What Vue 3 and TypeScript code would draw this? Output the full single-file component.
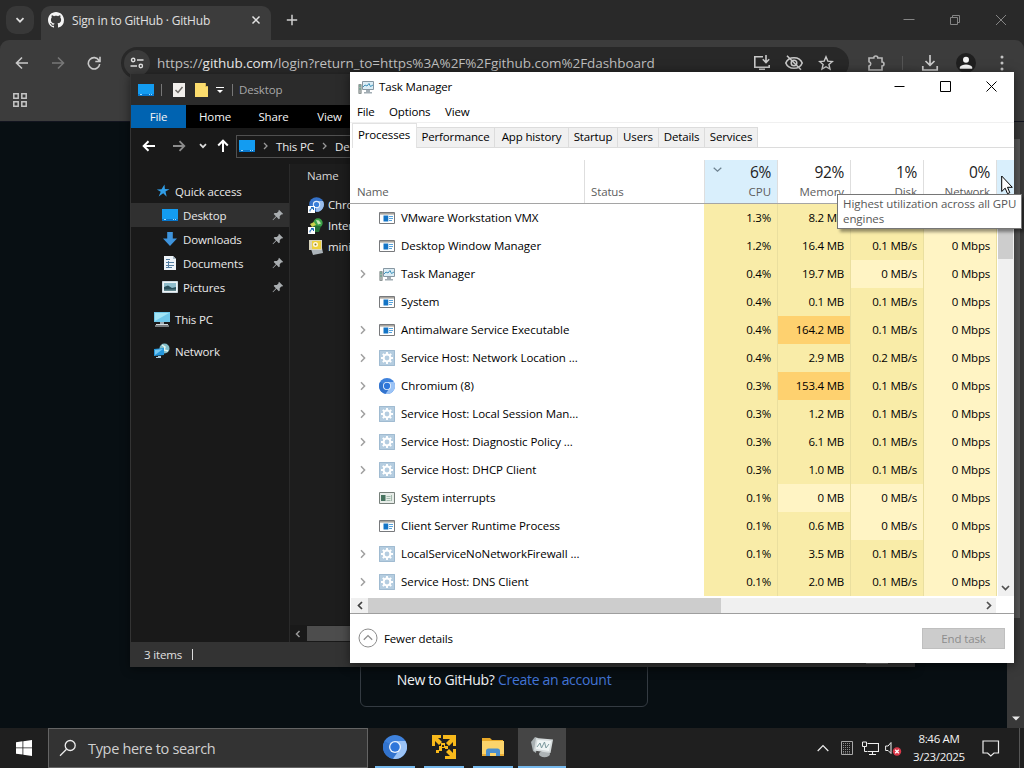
<script setup lang="ts">
interface Proc {
  name: string
  icon: string
  expand: boolean
  cpu: string
  mem: string
  disk: string
}

const processes: Proc[] = [
  { name: 'VMware Workstation VMX', icon: 'app', expand: false, cpu: '1.3%', mem: '8.2 MB', disk: '' },
  { name: 'Desktop Window Manager', icon: 'app', expand: false, cpu: '1.2%', mem: '16.4 MB', disk: '0.1 MB/s' },
  { name: 'Task Manager', icon: 'taskmgr', expand: true, cpu: '0.4%', mem: '19.7 MB', disk: '0 MB/s' },
  { name: 'System', icon: 'app', expand: false, cpu: '0.4%', mem: '0.1 MB', disk: '0.1 MB/s' },
  { name: 'Antimalware Service Executable', icon: 'app', expand: true, cpu: '0.4%', mem: '164.2 MB', disk: '0.1 MB/s' },
  { name: 'Service Host: Network Location ...', icon: 'gear', expand: true, cpu: '0.4%', mem: '2.9 MB', disk: '0.2 MB/s' },
  { name: 'Chromium (8)', icon: 'chromium', expand: true, cpu: '0.3%', mem: '153.4 MB', disk: '0.1 MB/s' },
  { name: 'Service Host: Local Session Man...', icon: 'gear', expand: true, cpu: '0.3%', mem: '1.2 MB', disk: '0.1 MB/s' },
  { name: 'Service Host: Diagnostic Policy ...', icon: 'gear', expand: true, cpu: '0.3%', mem: '6.1 MB', disk: '0.1 MB/s' },
  { name: 'Service Host: DHCP Client', icon: 'gear', expand: true, cpu: '0.3%', mem: '1.0 MB', disk: '0.1 MB/s' },
  { name: 'System interrupts', icon: 'sysint', expand: false, cpu: '0.1%', mem: '0 MB', disk: '0 MB/s' },
  { name: 'Client Server Runtime Process', icon: 'app', expand: false, cpu: '0.1%', mem: '0.6 MB', disk: '0 MB/s' },
  { name: 'LocalServiceNoNetworkFirewall ...', icon: 'gear', expand: true, cpu: '0.1%', mem: '3.5 MB', disk: '0.1 MB/s' },
  { name: 'Service Host: DNS Client', icon: 'gear', expand: true, cpu: '0.1%', mem: '2.0 MB', disk: '0.1 MB/s' },
]

const heat = (value: string): string => {
  const n = parseFloat(value)
  if (n === 0) return 'cool'
  return n > 100 ? 'hot' : 'warm'
}

const quickAccess = [
  { name: 'Desktop', icon: 'desktop', active: true },
  { name: 'Downloads', icon: 'downloads', active: false },
  { name: 'Documents', icon: 'documents', active: false },
  { name: 'Pictures', icon: 'pictures', active: false },
]

const files = [
  { name: 'Chromium', icon: 'chromelink' },
  { name: 'Internet', icon: 'netlink' },
  { name: 'mini', icon: 'installer' },
]

const tabs = ['Performance', 'App history', 'Startup', 'Users', 'Details', 'Services']
</script>

<template>
  <div class="screen">
    <svg class="defs" aria-hidden="true">
      <symbol id="i-app" viewBox="0 0 16 16">
        <path d="M.5 2.5h15v11H.5z" fill="#fff" stroke="#77797c" />
        <path d="M1 3h14v1.600H1z" fill="#a9a59e" />
        <path d="M4.500 5.500h4.800v6H4.500z" fill="#1374c6" />
        <path d="M10 6.500h4M10 8.500h4M10 10.500h3" stroke="#58a4dd" />
      </symbol>
      <symbol id="i-sysint" viewBox="0 0 16 16">
        <path d="M.5 2.500h15v11H.5z" fill="#e7ece8" stroke="#77807b" />
        <path d="M2 5h4.500v6H2z" fill="#47735f" />
        <path d="M7.500 6.500h4M7.500 8.500h4M7.500 10.500h4M12.500 5v6" stroke="#a4bcae" />
      </symbol>
      <symbol id="i-taskmgr" viewBox="0 0 16 16">
        <path d="M.8 5.500h2.400v9H.8z" fill="#b5b9b8" stroke="#7f8988" stroke-width=".8" />
        <path d="M1 7h2M1 10h2" stroke="#54a083" />
        <path d="M4.500 2.500h11v8h-11z" fill="#dcedf5" stroke="#8797a2" />
        <path d="M5 8l2-2 2 1 2-2.500 1.500 3L15 6" fill="none" stroke="#3e92bb" />
        <path d="M8 11h4v2H8zM6 13h8v1.500H6z" fill="#a2adb4" />
      </symbol>
      <symbol id="i-gear" viewBox="0 0 16 16">
        <path d="M0 0h16v16H0z" fill="#b5cde0" />
        <path d="M.5.5h15v15H.5z" fill="none" stroke="#a0bbd1" />
        <circle cx="8" cy="8" r="3.400" fill="none" stroke="#fff" stroke-width="2" />
        <path d="M8 2v2.500M8 11.500V14M2 8h2.500M11.500 8H14M3.800 3.800l1.700 1.700M10.500 10.500l1.700 1.700M12.200 3.800l-1.700 1.700M5.500 10.500l-1.700 1.700" stroke="#fff" stroke-width="1.900" />
      </symbol>
      <symbol id="i-chromium" viewBox="0 0 24 24">
        <circle cx="12" cy="12" r="12" fill="#3f82dc" />
        <path d="M12 12L1.600 6A12 12 0 0 0 10 23.800L16 14z" fill="#3273cd" />
        <path d="M12 6h10.400A12 12 0 0 1 10 23.800L17 14z" fill="#9bc3f6" />
        <circle cx="12" cy="12" r="6" fill="#e9f2fd" />
        <circle cx="12" cy="12" r="4.700" fill="#2f76da" />
      </symbol>
      <symbol id="i-desktop" viewBox="0 0 16 16">
        <path d="M0 2h16v10H0z" fill="#139cf1" />
        <path d="M0 12h16v2H0z" fill="#0877cc" />
        <path d="M2 12.500h2M11 12.500h1M13 12.500h1" stroke="#9ddafd" />
      </symbol>
      <symbol id="i-downloads" viewBox="0 0 16 16">
        <path d="M5.200 1h5.600v6.500H15L8 15 1 7.500h4.200z" fill="#3e94dd" />
      </symbol>
      <symbol id="i-documents" viewBox="0 0 16 16">
        <path d="M2 1h9l3 3v11H2z" fill="#edf3f8" />
        <path d="M11 1v3h3z" fill="#aabac7" />
        <path d="M4 4.500h4M4 7.500h8M4 10.500h8M4 12.500h6M6.500 6v7" stroke="#537da1" />
      </symbol>
      <symbol id="i-pictures" viewBox="0 0 16 16">
        <path d="M.5 2.500h15v11H.5z" fill="#eef4f7" stroke="#ccd8df" />
        <path d="M2 4h12v8H2z" fill="#8ebccb" />
        <path d="M2 8l4-1.500L10 9l4-1v4H2z" fill="#294f5b" />
        <path d="M2 10.500h12V12H2z" fill="#648990" />
      </symbol>
      <symbol id="i-pc" viewBox="0 0 16 16">
        <path d="M0 1h16v10H0z" fill="#6fc7e9" />
        <path d="M1 2h14L1 10z" fill="#a1e4f5" />
        <path d="M6 11h4v2H6z" fill="#9cabb3" />
        <path d="M2 13.500h12M1 15h14" stroke="#d4dce1" />
      </symbol>
      <symbol id="i-network" viewBox="0 0 16 16">
        <circle cx="10.500" cy="5.500" r="5" fill="#83bec9" />
        <path d="M8 2l3 2-1 3 4 1" fill="none" stroke="#e6f5ec" stroke-width="1.500" />
        <path d="M0 6l10-1v7L0 13z" fill="#2597dc" />
        <path d="M1 7l8-1L1 12z" fill="#76c8f2" />
        <path d="M4 13h3v2H2v-1h2z" fill="#acc8d9" />
      </symbol>
      <symbol id="i-chromelink" viewBox="0 0 16 16">
        <circle cx="8.500" cy="7.500" r="7.300" fill="#3572c9" />
        <path d="M8.500 4h6.500A7.300 7.300 0 0 1 8 14.800z" fill="#99bdec" />
        <circle cx="8.500" cy="7.500" r="3.700" fill="#e4effb" />
        <circle cx="8.500" cy="7.500" r="2.600" fill="#397fda" />
        <path d="M0 9h7v7H0z" fill="#fff" />
        <path d="M2 14.500v-2l3-1.500M3 10.500h2.500V13" stroke="#1768bb" fill="none" />
      </symbol>
      <symbol id="i-netlink" viewBox="0 0 16 16">
        <circle cx="10" cy="5" r="4.700" fill="#3da249" />
        <path d="M8 2l3 .5 2 3-3 1z" fill="#c6e6b3" />
        <path d="M4 7l9 1-2 6H6z" fill="#226f36" />
        <path d="M2 6l4-2 2 3-4 2z" fill="#cbd24d" />
        <path d="M0 9h7v7H0z" fill="#fff" />
        <path d="M2 14.500v-2l3-1.500M3 10.500h2.500V13" stroke="#1768bb" fill="none" />
      </symbol>
      <symbol id="i-installer" viewBox="0 0 16 16">
        <path d="M3 10l11-1 1 5-10 2z" fill="#acb4ba" />
        <path d="M1 1h13v10H1z" fill="#d8d3bb" />
        <path d="M4 2h9v8H4z" fill="#eed13e" />
        <circle cx="7.500" cy="5.500" r="2.500" fill="#fff9df" />
        <circle cx="7.500" cy="5.500" r="1" fill="#8b7930" />
      </symbol>
      <symbol id="i-pin" viewBox="0 0 12 12">
        <path d="M7 .8l4.200 4.200-1.300.6-.6-.1-1.600 1.700.1 2.200-1 .8-2.300-2.400L1 11.200l-.4-.4L3.900 7.300 1.700 5l.8-1 2.300.1 1.700-1.600-.1-.6z" fill="#a9adb0" />
      </symbol>
    </svg>

    <!-- Browser -->
    <section class="browser">
      <div class="tabstrip">
        <div class="tabsearch">
          <svg width="12" height="12" viewBox="0 0 12 12"><path d="M2.500 4.200L6 7.700l3.500-3.500" fill="none" stroke="#dedede" stroke-width="1.700" /></svg>
        </div>
        <div class="btab">
          <svg width="16" height="16" viewBox="0 0 16 16"><path fill="#f5f5f5" d="M8 0C3.580 0 0 3.580 0 8c0 3.540 2.290 6.530 5.470 7.590.4.070.55-.17.55-.38 0-.19-.01-.82-.01-1.490-2.010.37-2.530-.49-2.690-.94-.09-.23-.48-.94-.82-1.130-.28-.15-.68-.52-.01-.53.630-.01 1.080.58 1.230.82.720 1.210 1.870.87 2.330.66.070-.52.280-.87.510-1.070-1.780-.2-3.640-.89-3.640-3.950 0-.87.310-1.590.82-2.150-.08-.2-.36-1.020.08-2.120 0 0 .67-.21 2.200.82.640-.18 1.320-.27 2-.27s1.360.09 2 .27c1.530-1.040 2.200-.82 2.200-.82.440 1.100.16 1.920.08 2.120.51.56.82 1.270.82 2.150 0 3.070-1.870 3.750-3.650 3.950.29.25.54.73.54 1.480 0 1.070-.01 1.930-.01 2.200 0 .21.15.46.55.38A8.010 8.010 0 0 0 16 8c0-4.420-3.580-8-8-8z" /></svg>
          <span class="btitle">Sign in to GitHub · GitHub</span>
          <svg class="bclose" width="10" height="10" viewBox="0 0 10 10"><path d="M1.500 1.500l7 7M8.500 1.500l-7 7" stroke="#e3e3e3" stroke-width="1.500" /></svg>
        </div>
        <svg class="plus" width="12" height="12" viewBox="0 0 12 12"><path d="M6 .8v10.400M.8 6h10.400" stroke="#cfcfcf" stroke-width="1.500" /></svg>
        <div class="bcontrols">
          <svg width="12" height="12" viewBox="0 0 12 12"><path d="M.5 5.500h11" stroke="#858585" /></svg>
          <svg width="12" height="12" viewBox="0 0 12 12"><path d="M1.500 3.500h7v7h-7zM3.500 3.500v-2h7v7h-2" fill="none" stroke="#858585" /></svg>
          <svg width="12" height="12" viewBox="0 0 12 12"><path d="M1 1l10 10M11 1L1 11" stroke="#858585" /></svg>
        </div>
      </div>
      <div class="toolbar">
        <svg class="nav" width="14" height="14" viewBox="0 0 14 14"><path d="M13 7H2M7 1.500L1.500 7 7 12.500" fill="none" stroke="#c9c9c9" stroke-width="1.600" /></svg>
        <svg class="nav fwd" width="14" height="14" viewBox="0 0 14 14"><path d="M1 7h11M7 1.500L12.500 7 7 12.500" fill="none" stroke="#777" stroke-width="1.600" /></svg>
        <svg class="nav rel" width="14" height="14" viewBox="0 0 14 14"><path d="M12 4.500A5.700 5.700 0 1 0 12.700 8M13 .8v4.700H8.300" fill="none" stroke="#c9c9c9" stroke-width="1.600" /></svg>
        <div class="address">
          <div class="site">
            <svg width="14" height="12" viewBox="0 0 14 12"><g fill="none" stroke="#dedede" stroke-width="1.400"><circle cx="3.200" cy="3" r="1.700" /><circle cx="10.800" cy="9" r="1.700" /><path d="M7 3h6.500M.5 9H7" /></g></svg>
          </div>
          <span class="url">https://<b>github.com</b>/login?return_to=https%3A%2F%2Fgithub.com%2Fdashboard</span>
          <svg class="install" width="18" height="16" viewBox="0 0 18 16"><path d="M10 1.800H1.800v10.400h14.400V10M6 14.200h6M13 0v7M9.800 4.300L13 7.500l3.200-3.200" fill="none" stroke="#c9c9c9" stroke-width="1.600" /></svg>
          <svg width="20" height="16" viewBox="0 0 20 16"><path d="M1.800 8C4.500 1 15.500 1 18.200 8 15.500 15 4.500 15 1.800 8zM3 .8l14 14" fill="none" stroke="#c9c9c9" stroke-width="1.600" /><circle cx="10" cy="8" r="2.800" fill="none" stroke="#c9c9c9" stroke-width="1.500" /></svg>
          <svg width="16" height="16" viewBox="0 0 16 16"><path d="M8 1.800l1.800 4.300 4.600.4-3.500 3 1.100 4.600L8 11.700l-4 2.400 1.100-4.600-3.500-3 4.600-.4z" fill="none" stroke="#c9c9c9" stroke-width="1.400" /></svg>
        </div>
        <div class="actions">
          <svg width="18" height="18" viewBox="0 0 18 18"><path d="M2 4h4.800a2 2 0 0 1 4 0H15v4a2 2 0 0 1 0 4v4H2v-4a2.200 2.200 0 0 0 0-4.300z" fill="none" stroke="#b9b9b9" stroke-width="1.600" /></svg>
          <i class="divider"></i>
          <svg width="18" height="18" viewBox="0 0 18 18"><path d="M9 1v10M4.500 7L9 11.300 13.500 7M1.800 12v4h14.400v-4" fill="none" stroke="#c9c9c9" stroke-width="1.700" /></svg>
          <div class="avatar"><svg width="14" height="14" viewBox="0 0 14 14"><circle cx="7" cy="3.700" r="3" fill="#f3f3f3" /><path d="M.8 12.800V11C2.500 7.500 11.500 7.500 13.200 11v1.800z" fill="#f3f3f3" /></svg></div>
          <svg width="4" height="16" viewBox="0 0 4 16"><g fill="#c4c4c4"><circle cx="2" cy="2" r="1.500" /><circle cx="2" cy="8" r="1.500" /><circle cx="2" cy="14" r="1.500" /></g></svg>
        </div>
      </div>
      <div class="bookmarks">
        <svg width="16" height="16" viewBox="0 0 16 16"><path d="M1.800 1.800h4.400v4.400H1.800zM9.800 1.800h4.400v4.400H9.800zM1.800 9.800h4.400v4.400H1.800zM9.800 9.800h4.400v4.400H9.800z" fill="none" stroke="#c4c4c4" stroke-width="1.500" /></svg>
      </div>
      <div class="page">
        <div class="signup"><span class="q">New to GitHub?</span> <a>Create an account</a></div>
        <div class="pagebar">
          <div class="pagethumb"></div>
          <svg width="8" height="5" viewBox="0 0 8 5"><path d="M0 .5h8L4 4.500z" fill="#e8e8e8" /></svg>
        </div>
      </div>
    </section>

    <!-- File explorer -->
    <section class="explorer">
      <header class="extitle">
        <svg width="16" height="16"><use href="#i-desktop" /></svg>
        <i class="bar"></i>
        <svg class="doc" width="12" height="16" viewBox="0 0 12 16"><path d="M0 1h12v14H0z" fill="#f1efec" /><path d="M2.500 8l2.500 2.500L9.500 5" fill="none" stroke="#6d6a67" stroke-width="1.500" /></svg>
        <svg class="fold" width="13" height="16" viewBox="0 0 13 16"><path d="M0 1h10v3h3v11H0z" fill="#fbdc6d" /><path d="M10.500 1v3.500H13" fill="none" stroke="#d9b955" /></svg>
        <svg class="drop" width="8" height="8" viewBox="0 0 8 8"><path d="M0 1.500h8" stroke="#fff" /><path d="M1 4h6L4 7z" fill="#fff" /></svg>
        <i class="bar"></i>
        <span class="exname">Desktop</span>
      </header>
      <nav class="ribbon"><span class="file">File</span><span class="r1">Home</span><span class="r2">Share</span><span class="r3">View</span></nav>
      <div class="exnav">
        <svg width="14" height="12" viewBox="0 0 14 12"><path d="M13 6H2M6.500 1.200L1.700 6l4.800 4.800" fill="none" stroke="#fff" stroke-width="2" /></svg>
        <svg class="ef" width="14" height="12" viewBox="0 0 14 12"><path d="M1 6h11M7.500 1.200L12.300 6l-4.800 4.800" fill="none" stroke="#8c8c8c" stroke-width="1.800" /></svg>
        <svg class="ec" width="8" height="6" viewBox="0 0 8 6"><path d="M1 1.200l3 3 3-3" fill="none" stroke="#ddd" stroke-width="1.700" /></svg>
        <svg class="eu" width="12" height="14" viewBox="0 0 12 14"><path d="M6 13V2M1.200 6.500L6 1.700l4.800 4.800" fill="none" stroke="#fff" stroke-width="2" /></svg>
        <div class="crumbs">
          <svg width="16" height="16"><use href="#i-desktop" /></svg>
          <svg class="cv" width="5" height="8" viewBox="0 0 5 8"><path d="M1 1l3 3-3 3" fill="none" stroke="#999" stroke-width="1.300" /></svg>
          <span>This PC</span>
          <svg class="cv" width="5" height="8" viewBox="0 0 5 8"><path d="M1 1l3 3-3 3" fill="none" stroke="#999" stroke-width="1.300" /></svg>
          <span>De</span>
        </div>
      </div>
      <div class="exbody">
        <aside>
          <div class="item root"><svg width="14" height="14" viewBox="0 0 14 14"><path d="M8.500.5l.4 4.500 4.600.3-4 2.200 1.200 5.200-3.500-3.500-4.500 3.300 2-4.700L.8 5.500l4.700-.2z" fill="#319ee7" /></svg><span>Quick access</span></div>
          <div v-for="q in quickAccess" :key="q.name" class="item sub" :class="{ on: q.active }">
            <svg width="16" height="16"><use :href="'#i-' + q.icon" /></svg><span>{{ q.name }}</span>
            <svg class="pin" width="12" height="12"><use href="#i-pin" /></svg>
          </div>
          <div class="item top"><svg width="16" height="16"><use href="#i-pc" /></svg><span>This PC</span></div>
          <div class="item top"><svg width="16" height="16"><use href="#i-network" /></svg><span>Network</span></div>
        </aside>
        <div class="files">
          <div class="fhead">Name</div>
          <div v-for="f in files" :key="f.name" class="frow"><svg width="16" height="16"><use :href="'#i-' + f.icon" /></svg><span>{{ f.name }}</span></div>
          <div class="fscroll">
            <svg width="6" height="8" viewBox="0 0 6 8"><path d="M4.500 1l-3 3 3 3" fill="none" stroke="#999" stroke-width="1.500" /></svg>
            <div class="fthumb"></div>
          </div>
        </div>
      </div>
      <footer class="exstatus"><span>3 items</span><i></i><div class="viewmode"></div></footer>
    </section>

    <!-- Task Manager -->
    <section class="tm">
      <header class="tmtitle">
        <svg width="16" height="16"><use href="#i-taskmgr" /></svg>
        <span>Task Manager</span>
        <div class="wc">
          <svg width="11" height="11" viewBox="0 0 11 11"><path d="M.5 5.500h10" stroke="#000" /></svg>
          <svg width="11" height="11" viewBox="0 0 11 11"><path d="M.5.5h10v10H.5z" fill="none" stroke="#000" /></svg>
          <svg width="11" height="11" viewBox="0 0 11 11"><path d="M.5.5l10 10M10.500.5l-10 10" stroke="#000" /></svg>
        </div>
      </header>
      <nav class="menu"><span class="m1">File</span><span class="m2">Options</span><span>View</span></nav>
      <nav class="tabs">
        <span class="sel">Processes</span>
        <span v-for="(t, i) in tabs" :key="t" class="tab" :class="'t' + i">{{ t }}</span>
        <div class="rest"></div>
      </nav>
      <div class="thead">
        <div class="h hn">Name</div>
        <div class="h hs">Status</div>
        <div class="h num sorted">
          <svg class="sort" width="9" height="6" viewBox="0 0 9 6"><path d="M.7.8l3.800 3.500L8.300.8" fill="none" stroke="#6d8290" stroke-width="1.200" /></svg>
          <b>6%</b><span>CPU</span>
        </div>
        <div class="h num"><b>92%</b><span>Memory</span></div>
        <div class="h num"><b>1%</b><span>Disk</span></div>
        <div class="h num"><b>0%</b><span>Network</span></div>
        <div class="h hover"></div>
      </div>
      <div class="tbody">
        <div class="rows">
          <div v-for="(p, i) in processes" :key="p.name" class="row">
            <div class="cell name">
              <svg class="exp" width="6" height="10" viewBox="0 0 6 10"><path v-if="p.expand" d="M1 1.200L4.600 5 1 8.800" fill="none" stroke="#a0a0a0" stroke-width="1.500" /></svg>
              <svg width="16" height="16"><use :href="'#i-' + p.icon" /></svg>
              <span>{{ p.name }}</span>
            </div>
            <div class="cell warm">{{ p.cpu }}</div>
            <div class="cell" :class="heat(p.mem)">{{ p.mem }}</div>
            <div class="cell" :class="heat(p.disk)">{{ p.disk }}</div>
            <div class="cell cool">{{ i > 0 ? '0 Mbps' : '' }}</div>
          </div>
        </div>
        <div class="vbar">
          <div class="vthumb"></div>
          <svg width="9" height="6" viewBox="0 0 9 6"><path d="M1 1l3.500 3.500L8 1" fill="none" stroke="#505050" stroke-width="1.700" /></svg>
        </div>
      </div>
      <div class="hbar">
        <div class="hb"><svg width="6" height="9" viewBox="0 0 6 9"><path d="M5 1L1.500 4.500 5 8" fill="none" stroke="#404040" stroke-width="1.700" /></svg></div>
        <div class="hthumb"></div>
        <div class="hb last"><svg width="6" height="9" viewBox="0 0 6 9"><path d="M1 1l3.500 3.500L1 8" fill="none" stroke="#505050" stroke-width="1.700" /></svg></div>
      </div>
      <footer class="tmfoot">
        <svg width="20" height="20" viewBox="0 0 20 20"><circle cx="10" cy="10" r="9" fill="#fff" stroke="#8d8d8d" /><path d="M5.800 11.800L10 7.600l4.200 4.200" fill="none" stroke="#8d8d8d" stroke-width="1.300" /></svg>
        <span>Fewer details</span>
        <div class="end">End task</div>
      </footer>
    </section>

    <div class="tooltip">Highest utilization across all GPU<br />engines</div>
    <svg class="cursor" width="12" height="20" viewBox="0 0 12 20"><path d="M.7 1v15.500l3.500-3.300 2.300 5.500 2.300-1L6.500 12.300h4.800z" fill="#fff" stroke="#000" /></svg>

    <!-- Taskbar -->
    <footer class="taskbar">
      <div class="start"><svg width="16" height="16" viewBox="0 0 16 16"><path d="M0 2.200L6.500 1.300v6.200H0zM7.300 1.200L16 0v7.500H7.300zM0 8.300h6.500v6.300L0 13.700zM7.300 8.300H16V16l-8.700-1.300z" fill="#fff" /></svg></div>
      <div class="search">
        <svg width="18" height="18" viewBox="0 0 18 18"><circle cx="11.200" cy="6.500" r="5" fill="none" stroke="#ededed" stroke-width="1.300" /><path d="M7.500 10.200L1 16.700" stroke="#ededed" stroke-width="1.300" /></svg>
        <span>Type here to search</span>
      </div>
      <div class="app"><svg width="24" height="24"><use href="#i-chromium" /></svg></div>
      <div class="app"><svg width="24" height="24" viewBox="0 0 24 24">
        <path d="M0 0h9v3H6l4 4-3 3-4-4v5H0zM11 0h13v11h-3V7l-4 4-3-3 4-4h-7zM24 14v10H13v-3h5l-4-4 3-3 4 4v-4z" fill="#f8b91b" />
        <path d="M9 8h4v3h3v3h-3v-1h-3v3H7v2H4v-3h3v-4h2z" fill="#f8b91b" /><path d="M10 10h2v2h-2z" fill="#302513" />
      </svg></div>
      <div class="app"><svg width="24" height="24" viewBox="0 0 24 24">
        <path d="M1 3h8l2 2h11v16H1z" fill="#e9a928" /><path d="M1 6h22v15H1z" fill="#fcd46b" /><path d="M5 21v-5q0-2.500 2.500-2.500h9q2.500 0 2.500 2.500v5h-4v-3H9v3z" fill="#4b8fce" /><path d="M1 19h4v2H1zM19 19h4v2h-4z" fill="#e9ad35" />
      </svg></div>
      <div class="app active"><svg width="24" height="24" viewBox="0 0 24 24">
        <ellipse cx="14.500" cy="19" rx="5.500" ry="3.200" fill="#aeb4b6" />
        <path d="M1 7l4-5 3 1-2 15-3-2z" fill="#a9b0b2" />
        <path d="M6 3l17 1.500L20.500 18 4 15.500z" fill="#d6dcdd" />
        <path d="M7.500 5l13.500 1-2 10L6 14z" fill="#f0f5f5" />
        <path d="M7 12l3-4 1.500 5 3-6 1.500 6 3-4" fill="none" stroke="#7b999d" />
      </svg></div>
      <div class="tray">
        <svg class="up" width="12" height="8" viewBox="0 0 12 8"><path d="M.7 7L6 1.500 11.300 7" fill="none" stroke="#eee" stroke-width="1.200" /></svg>
        <svg class="chip" width="12" height="14" viewBox="0 0 12 14"><path d="M.5.5h11v13H.5z" fill="none" stroke="#a8a8a8" /><path d="M2 2.500h8M2 4.500h8M2 6.500h8M2 8.500h8M2 10.500h8M2 12h8" stroke="#8b8b8b" stroke-dasharray="1 1" /></svg>
        <svg class="net" width="17" height="15" viewBox="0 0 17 15"><path d="M5.500 2.500h11v8h-11M10.500 10.500v3M7 13.500h7" fill="none" stroke="#eee" stroke-width="1.100" /><path d="M.5 1h4v4.500h-4zM2.500 5.500v5H5" fill="none" stroke="#eee" /></svg>
        <svg class="snd" width="17" height="15" viewBox="0 0 17 15"><path d="M.6 5h2.500L6 1.500v11L3.100 9.500H.6z" fill="none" stroke="#eee" /><circle cx="12" cy="10.500" r="4.200" fill="#d93849" /><path d="M10.200 8.700l3.600 3.600M13.800 8.700l-3.600 3.600" stroke="#fff" stroke-width="1.300" /></svg>
        <div class="clock"><span>8:46 AM</span><span class="date">3/23/2025</span></div>
        <svg class="note" width="18" height="17" viewBox="0 0 18 17"><path d="M1 1h15.500v12H12l-3.200 3-3.200-3H1z" fill="none" stroke="#eee" stroke-width="1.200" /></svg>
        <i class="peek"></i>
      </div>
    </footer>
  </div>
</template>

<style>
html, body { margin: 0; overflow: hidden; background: #080f13; }
</style>

<style scoped>
* { box-sizing: border-box; }
.screen { position: relative; width: 1024px; height: 768px; overflow: hidden; background: #080f13; font-family: "Open Sans", "Noto Sans", sans-serif; font-size: 11.5px; letter-spacing: -0.14px; color: #000; white-space: nowrap; }
svg { flex: none; display: block; }
.defs { position: absolute; width: 0; height: 0; }

.browser { display: flex; flex-direction: column; height: 728px; background: #292929; }
.tabstrip { height: 40px; background: #292929; display: flex; align-items: center; flex: none; }
.tabsearch { width: 28px; height: 28px; margin-left: 6px; border-radius: 10px; background: #383838; display: grid; place-items: center; }
.btab { align-self: flex-end; margin-left: 7px; width: 230px; height: 34px; border-radius: 9px 9px 0 0; background: #3c3c3c; display: flex; align-items: center; padding: 0 10px 6px 7px; color: #e0e0e0; font-size: 12px; letter-spacing: -0.2px; }
.btitle { margin-left: 8px; flex: 1; }
.plus { margin-left: 15px; }
.bcontrols { margin-left: auto; margin-right: 17px; display: flex; gap: 34px; }
.toolbar { height: 46px; background: #3c3c3c; border-radius: 9px 9px 0 0; display: flex; align-items: center; flex: none; padding-left: 15px; }
.fwd { margin-left: 22px; }
.rel { margin-left: 22px; }
.address { margin-left: 20px; width: 728px; height: 32px; border-radius: 16px; background: #282828; display: flex; align-items: center; padding: 0 15px 0 3px; }
.site { width: 26px; height: 26px; border-radius: 50%; background: #3b3b3b; display: grid; place-items: center; }
.url { margin-left: 7px; flex: 1; font-size: 13.5px; letter-spacing: -0.055px; color: #bfbfbf; }
.url b { font-weight: 400; color: #e6e6e6; }
.address > svg + svg { margin-left: 13px; }
.address > svg:last-child { margin-left: 14px; }
.actions { display: flex; align-items: center; margin-left: 18px; }
.divider { width: 1px; height: 14px; margin: 0 18px 0 17px; background: #555; }
.avatar { width: 20px; height: 20px; border-radius: 50%; background: #1f1f1f; margin: 0 24px 0 17px; display: grid; place-items: center; }
.bookmarks { height: 35px; flex: none; background: #3c3c3c; padding: 6px 0 0 12px; }
.page { flex: 1; background: #080f13; border-top: 1px solid #12141f; display: flex; align-items: flex-end; }
.signup { width: 288px; height: 70px; margin: 0 0 21px 360px; border: 1px solid #343b42; border-radius: 6px; text-align: center; font-size: 14px; letter-spacing: -0.3px; line-height: 56px; padding-top: 14px; color: #f0f3f6; }
.signup a { color: #4274d6; }
.pagebar { margin-left: auto; width: 17px; height: 100%; background: #393939; display: flex; flex-direction: column; align-items: center; justify-content: space-between; padding: 17px 0 7px; }
.pagethumb { width: 9px; height: 479px; background: #585858; }

.explorer { position: absolute; left: 130px; top: 74px; width: 785px; height: 593px; background: #191919; border: 1px solid #333; border-top: 0; color: #e9e9e9; display: flex; flex-direction: column; box-shadow: 0 2px 9px rgba(0, 0, 0, 0.45); }
.extitle { height: 31px; background: #2b2b2b; display: flex; align-items: center; padding-left: 7px; color: #a8a8a8; flex: none; }
.extitle .bar { width: 1px; height: 12px; margin-left: 7px; background: #777; }
.extitle .doc { margin-left: 11px; }
.extitle .fold { margin-left: 10px; }
.extitle .drop { margin-left: 8px; }
.extitle .drop + .bar { margin-left: 8px; }
.exname { margin-left: 6px; }
.ribbon { height: 23px; background: #000; display: flex; flex: none; line-height: 23px; color: #f5f5f5; }
.file { width: 55px; background: #0063b1; text-align: center; }
.r1 { width: 58px; text-align: center; }
.r2 { width: 59px; text-align: center; }
.r3 { width: 53px; text-align: center; }
.exnav { height: 36px; flex: none; display: flex; align-items: center; padding-left: 11px; }
.ef { margin-left: 16px; }
.ec { margin-left: 13px; }
.eu { margin-left: 10px; }
.crumbs { margin-left: 7px; height: 23px; flex: 1; border: 1px solid #505050; display: flex; align-items: center; padding-left: 2px; }
.crumbs .cv { margin-left: 8px; }
.crumbs .cv + span { margin-left: 8px; }
.exbody { flex: 1; display: flex; }
aside { width: 159px; border-right: 1px solid #2a2a2a; padding-top: 15px; }
.item { height: 24px; display: flex; align-items: center; }
.root { padding-left: 25px; }
.root span { margin-left: 5px; }
.sub { padding-left: 31px; }
.sub span { margin-left: 5px; flex: 1; }
.sub .pin { margin-right: 5px; }
.on { background: #303030; }
.top { margin-top: 8px; padding-left: 23px; }
.top span { margin-left: 5px; }
.files { flex: 1; display: flex; flex-direction: column; background: #1d1d1d; }
.fhead { height: 24px; line-height: 24px; padding-left: 17px; color: #d5d5d5; margin-bottom: 6px; }
.frow { height: 21px; display: flex; align-items: center; gap: 4px; padding-left: 18px; }
.fscroll { margin-top: auto; height: 17px; background: #191919; display: flex; align-items: center; padding: 0 0 0 5px; }
.fthumb { margin-left: 6px; width: 470px; height: 15px; background: #4d4d4d; }
.exstatus { height: 24px; flex: none; background: #333; display: flex; align-items: center; padding-left: 13px; color: #e0e0e0; }
.exstatus i { width: 1px; height: 11px; background: #ddd; margin-left: 10px; }
.viewmode { width: 22px; height: 22px; background: #6a6a6a; margin-left: auto; margin-right: 26px; align-self: flex-start; }

.tm { position: absolute; left: 350px; top: 72px; width: 664px; height: 591px; background: #fff; display: flex; flex-direction: column; box-shadow: 0 2px 10px rgba(0, 0, 0, 0.5); }
.tmtitle { height: 30px; flex: none; display: flex; align-items: center; padding-left: 8px; padding-bottom: 1px; }
.tmtitle span { margin-left: 5px; }
.wc { margin-left: auto; margin-right: 17px; display: flex; gap: 35px; }
.menu { height: 20px; flex: none; display: flex; line-height: 20px; padding-left: 7px; }
.m1 { width: 32px; }
.m2 { width: 56px; }
.tabs { height: 26px; flex: none; display: flex; align-items: flex-end; padding-left: 2px; border-top: 1px solid #f0f0f0; line-height: 20px; }
.sel { height: 25px; width: 65px; padding-left: 5px; line-height: 22px; border: 1px solid #e2e2e2; border-bottom: 0; }
.tab { height: 21px; background: #f0f0f0; border: 1px solid #dcdcdc; border-left: 0; text-align: center; line-height: 18px; }
.t0 { width: 78px; }
.t1 { width: 74px; }
.t2 { width: 49px; }
.t3 { width: 41px; }
.t4 { width: 46px; }
.t5 { width: 53px; }
.rest { flex: 1; border-bottom: 1px solid #dcdcdc; }
.thead { margin-top: 12px; height: 44px; flex: none; border-bottom: 1px solid #a5a5a5; display: grid; grid-template-columns: 235px 120px 73px 73px 73px 73px 17px; color: #5d5d5d; }
.h { border-right: 1px solid #dedede; display: flex; flex-direction: column; justify-content: flex-end; line-height: 16px; padding-bottom: 3px; }
.hn { padding-left: 7px; }
.hs { padding-left: 6px; }
.num { align-items: flex-end; padding-right: 6px; position: relative; letter-spacing: -0.05px; }
.num b { font-weight: 400; font-size: 15.500px; letter-spacing: -0.35px; line-height: 20px; color: #222; margin-bottom: 2px; }
.sort { position: absolute; left: 8px; top: 7px; }
.sorted, .hover { background: #d9effc; }
.hover { border-right: 0; }
.tbody { height: 392px; flex: none; display: flex; }
.rows { width: 648px; }
.row { height: 28px; display: grid; grid-template-columns: 354px 74px 73px 73px 73px; line-height: 28px; }
.cell { text-align: right; padding-right: 6px; border-right: 1px solid #eadf9f; letter-spacing: -0.22px; }
.name { display: flex; align-items: center; border: 0; padding-left: 10px; letter-spacing: -0.06px; }
.name .exp { margin-right: 13px; }
.name span { margin-left: 6px; }
.warm { background: #f9eca8; }
.cool { background: #fff4c4; }
.hot { background: #fed16f; }
.vbar { flex: 1; background: #f0f0f0; display: flex; flex-direction: column; align-items: center; justify-content: space-between; padding: 17px 1px 5px 0; }
.vthumb { width: 100%; height: 38px; background: #cdcdcd; }
.hbar { margin-top: 2px; height: 15px; flex: none; width: 645px; margin-left: 1px; background: #f0f0f0; display: flex; }
.hb { width: 17px; height: 15px; display: grid; place-items: center; }
.hthumb { width: 353px; background: #cdcdcd; }
.last { margin-left: auto; width: 15px; }
.tmfoot { flex: 1; border-top: 1px solid #9e9e9e; display: flex; align-items: center; padding: 0 9px 1px 8px; }
.tmfoot span { margin-left: 6px; }
.end { margin-left: auto; width: 83px; height: 21px; border: 1px solid #bfbfbf; background: #ccc; color: #8c8c8c; line-height: 19px; text-align: center; }

.tooltip { position: absolute; left: 837px; top: 194px; width: 185px; height: 35px; background: #fff; border: 1px solid #767676; padding: 1px 5px; line-height: 15px; color: #575757; box-shadow: 3px 3px 3px rgba(0, 0, 0, 0.4); letter-spacing: -0.07px; }
.cursor { position: absolute; left: 1001px; top: 175px; }

.taskbar { position: relative; height: 40px; background: #1f1f1f; display: flex; }
.start { width: 48px; display: grid; place-items: center; }
.search { width: 320px; background: #333; border: 1px solid #646464; display: flex; align-items: center; padding-left: 10px; font-size: 14.500px; letter-spacing: -0.32px; color: #d0d0d0; }
.search span { margin-left: 11px; }
.app { width: 40px; margin-left: 9px; display: grid; place-items: center; border-bottom: 2px solid #76b9ed; }
.search + .app { margin-left: 7px; }
.active { width: 48px; margin-left: 5px; background: #454545; }
.tray { margin-left: auto; display: flex; align-items: center; color: #f3f3f3; }
.chip { margin-left: 12px; }
.net { margin-left: 9px; }
.snd { margin-left: 6px; }
.clock { width: 56px; margin-left: 9px; display: flex; flex-direction: column; align-items: center; line-height: 18px; letter-spacing: -0.3px; padding-bottom: 1px; }
.note { margin-left: 15px; margin-top: 1px; }
.peek { width: 1px; height: 40px; background: #555; margin: 0 4px 0 19px; }
</style>
